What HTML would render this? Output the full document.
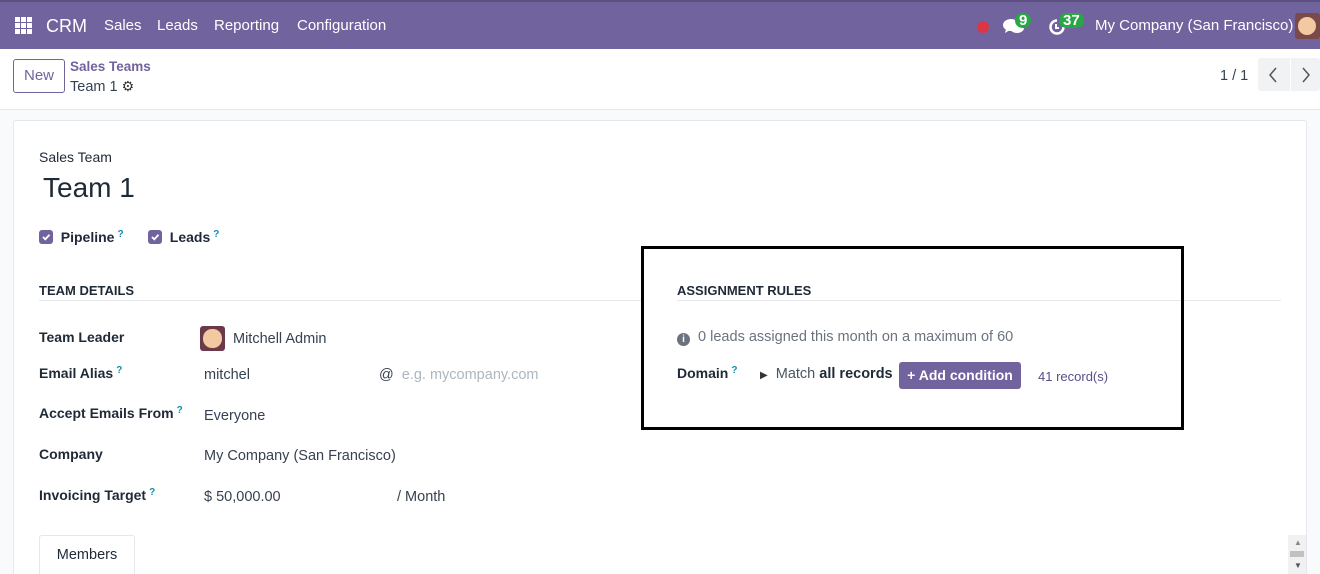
<!DOCTYPE html>
<html><head><meta charset="utf-8"><style>
*{box-sizing:border-box;margin:0;padding:0}
html,body{width:1320px;height:574px;overflow:hidden}
body{background:#f9fafb;font-family:"Liberation Sans",sans-serif;color:#374151;font-size:14px;position:relative}
.a{position:absolute;white-space:nowrap}
.nav{position:absolute;left:0;top:0;width:1320px;height:49px;background:#71639e;border-top:2px solid #5b5080;color:#fff}
.nav .a{font-size:15px;top:15px}
.cp{position:absolute;left:0;top:49px;width:1320px;height:61px;background:#fff;border-bottom:1px solid #e5e7eb}
.sheet{position:absolute;left:13px;top:120px;width:1294px;height:470px;background:#fff;border:1px solid #e5e7eb;border-radius:3px}
.lbl{font-weight:bold;color:#1f2937;font-size:14px}
.q{color:#0f8fa8;font-size:10px;font-weight:bold;vertical-align:top;margin-left:3px}
.cb{width:14px;height:14px;background:#71639e;border-radius:3px;display:inline-block;position:relative}
.badge{background:#28a745;color:#fff;font-size:10px;font-weight:bold;border-radius:8px;padding:1px 4px;line-height:13px}
</style></head><body>
<div class="nav">
 <svg class="a" style="left:15px;top:15px" width="17" height="17" viewBox="0 0 17 17" fill="#fff"><rect x="0" y="0" width="5" height="5"/><rect x="6" y="0" width="5" height="5"/><rect x="12" y="0" width="5" height="5"/><rect x="0" y="6" width="5" height="5"/><rect x="6" y="6" width="5" height="5"/><rect x="12" y="6" width="5" height="5"/><rect x="0" y="12" width="5" height="5"/><rect x="6" y="12" width="5" height="5"/><rect x="12" y="12" width="5" height="5"/></svg>
 <div class="a" style="left:46px;top:14px;font-size:18px">CRM</div>
 <div class="a" style="left:104px">Sales</div>
 <div class="a" style="left:157px">Leads</div>
 <div class="a" style="left:214px">Reporting</div>
 <div class="a" style="left:297px">Configuration</div>
 <div class="a" style="left:977px;top:19px;width:12px;height:12px;border-radius:6px;background:#dc3545"></div>
 <svg class="a" style="left:1003px;top:16px" width="22" height="17" viewBox="0 0 22 17" fill="#fff"><ellipse cx="8" cy="7" rx="8" ry="6"/><path d="M3 11 L2 15 L7 12z"/><ellipse cx="14" cy="10" rx="7" ry="5"/></svg>
 <div class="a badge" style="left:1015px;top:11px">9</div>
 <svg class="a" style="left:1048px;top:16px" width="18" height="18" viewBox="0 0 18 18"><path d="M15.5 9 A6.5 6.5 0 1 1 9 2.5" fill="none" stroke="#fff" stroke-width="2.5"/><path d="M8 6v4h3" stroke="#fff" stroke-width="2" fill="none"/></svg>
 <div class="a badge" style="left:1059px;top:11px">37</div>
 <div class="a" style="left:1095px">My Company (San Francisco)</div>
 <div class="a" style="left:1295px;top:11px;width:25px;height:26px;background:#7a4a4a;border-radius:3px"><div style="margin:4px 3px;width:18px;height:18px;border-radius:9px;background:#f2c9a0"></div></div>
</div>
<div class="cp">
 <div class="a" style="left:13px;top:10px;width:52px;height:34px;border:1px solid #71639e;border-radius:3px;color:#71639e;font-size:15px;text-align:center;line-height:32px">New</div>
 <div class="a" style="left:70px;top:10px;color:#71639e;font-weight:bold;font-size:13.5px">Sales Teams</div>
 <div class="a" style="left:70px;top:29px;font-size:14.5px">Team 1 <span style="font-size:14px;color:#333">⚙</span></div>
 <div class="a" style="left:1220px;top:19px;font-size:14.5px">1 / 1</div>
 <div class="a" style="left:1258px;top:9px;width:62px;height:33px;background:#f1f2f4;border-radius:3px"></div>
 <div class="a" style="left:1290px;top:9px;width:1px;height:33px;background:#fff"></div>
 <svg class="a" style="left:1268px;top:18px" width="10" height="16"><path d="M8 1 L2 8 L8 15" fill="none" stroke="#555" stroke-width="1.5"/></svg>
 <svg class="a" style="left:1301px;top:18px" width="10" height="16"><path d="M2 1 L8 8 L2 15" fill="none" stroke="#555" stroke-width="1.5"/></svg>
</div>
<div class="sheet"></div>
<div class="a" style="left:39px;top:149px;font-size:14px;color:#1f2937">Sales Team</div>
<div class="a" style="left:43px;top:172px;font-size:28px;color:#1f2937">Team 1</div>
<div class="a" style="left:39px;top:229px;font-size:14px;color:#1f2937"><span class="cb" style="vertical-align:-2px"><svg style="position:absolute;left:2px;top:2px" width="10" height="10"><path d="M2 5 L4.3 7.3 L8.5 2.8" fill="none" stroke="#fff" stroke-width="1.8"/></svg></span>&nbsp;&nbsp;<b>Pipeline</b><span class="q">?</span></div>
<div class="a" style="left:148px;top:229px;font-size:14px;color:#1f2937"><span class="cb" style="vertical-align:-2px"><svg style="position:absolute;left:2px;top:2px" width="10" height="10"><path d="M2 5 L4.3 7.3 L8.5 2.8" fill="none" stroke="#fff" stroke-width="1.8"/></svg></span>&nbsp;&nbsp;<b>Leads</b><span class="q">?</span></div>
<div class="a lbl" style="left:39px;top:283px;font-size:13px">TEAM DETAILS</div>
<div class="a" style="left:39px;top:300px;width:602px;height:1px;background:#e5e7eb"></div>
<div class="a lbl" style="left:677px;top:283px;font-size:13px">ASSIGNMENT RULES</div>
<div class="a" style="left:677px;top:300px;width:604px;height:1px;background:#e5e7eb"></div>
<div class="a lbl" style="left:39px;top:329px">Team Leader</div>
<div class="a" style="left:200px;top:326px;width:25px;height:25px;background:#6b3a4a;border-radius:3px"><div style="margin:3px;width:19px;height:19px;border-radius:9px;background:#f2c9a0"></div></div>
<div class="a" style="left:233px;top:331px;font-size:14.5px">Mitchell Admin</div>
<div class="a lbl" style="left:39px;top:365px">Email Alias<span class="q">?</span></div>
<div class="a" style="left:204px;top:367px;font-size:14.5px">mitchel</div>
<div class="a" style="left:379px;top:367px;font-size:14.5px">@ <span style="color:#adb5bd;margin-left:4px">e.g. mycompany.com</span></div>
<div class="a lbl" style="left:39px;top:405px">Accept Emails From<span class="q">?</span></div>
<div class="a" style="left:204px;top:408px;font-size:14.5px">Everyone</div>
<div class="a lbl" style="left:39px;top:446px">Company</div>
<div class="a" style="left:204px;top:448px;font-size:14.5px">My Company (San Francisco)</div>
<div class="a lbl" style="left:39px;top:487px">Invoicing Target<span class="q">?</span></div>
<div class="a" style="left:204px;top:489px;font-size:14.5px">$ 50,000.00</div>
<div class="a" style="left:397px;top:489px;font-size:14.5px">/ Month</div>
<div class="a" style="left:39px;top:535px;width:96px;height:40px;border:1px solid #e5e7eb;border-bottom:none;border-radius:3px 3px 0 0;background:#fff;text-align:center;line-height:38px;font-size:14.5px;color:#1f2937">Members</div>
<div class="a" style="left:677px;top:329px;font-size:14.5px;color:#6b7280"><span style="display:inline-block;width:13px;height:13px;border-radius:7px;background:#6b7280;color:#fff;font-size:10px;text-align:center;line-height:13px;font-weight:bold;vertical-align:-1px">i</span>&nbsp; 0 leads assigned this month on a maximum of 60</div>
<div class="a lbl" style="left:677px;top:365px">Domain<span class="q">?</span></div>
<div class="a" style="left:760px;top:366px;font-size:14.5px;color:#4b5563"><span style="font-size:10px;color:#333">▶</span>&nbsp; Match <b style="color:#1f2937">all records</b></div>
<div class="a" style="left:899px;top:362px;width:122px;height:27px;background:#71639e;border-radius:3px;color:#fff;font-weight:bold;font-size:14px;text-align:center;line-height:27px">+ Add condition</div>
<div class="a" style="left:1038px;top:369px;font-size:13px;color:#5a4d8a">41 record(s)</div>
<div class="a" style="left:641px;top:246px;width:543px;height:184px;border:3px solid #000"></div>
<div class="a" style="left:1288px;top:535px;width:18px;height:39px;background:#f1f1f1"></div>
<div class="a" style="left:1294px;top:538px;font-size:8px;color:#888">▲</div>
<div class="a" style="left:1290px;top:551px;width:14px;height:6px;background:#c1c1c1"></div>
<div class="a" style="left:1294px;top:561px;font-size:8px;color:#555">▼</div>
</body></html>
